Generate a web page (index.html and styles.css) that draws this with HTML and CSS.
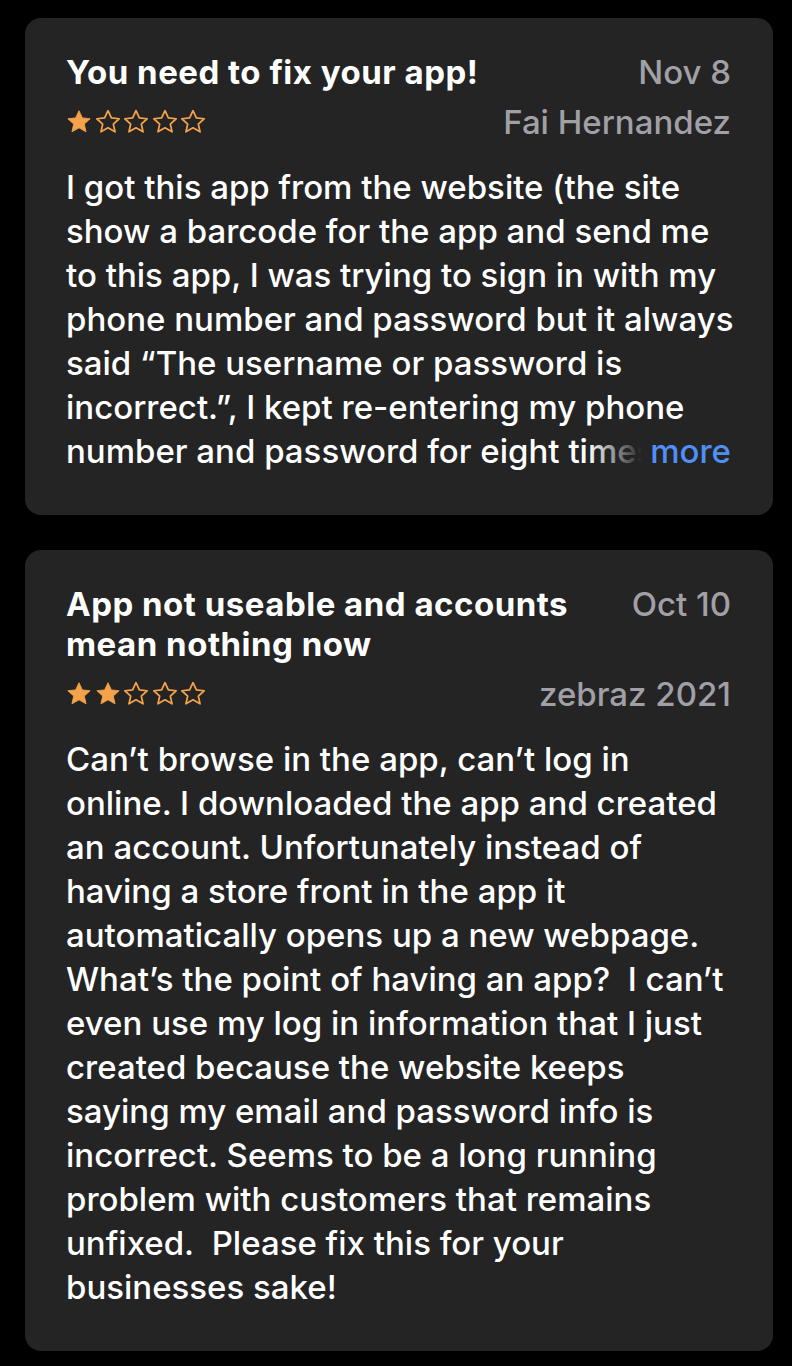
FILE: index.html
```html
<!DOCTYPE html>
<html lang="en">
<head>
<meta charset="utf-8">
<title>Reviews</title>
<link rel="stylesheet" href="styles.css">
</head>
<body>
<main class="list">
  <article class="card">
    <header class="head">
      <div class="row">
        <h2 class="title">You need to fix your app!</h2>
        <div class="date">Nov 8</div>
      </div>
      <div class="row meta">
        <div class="stars" aria-label="1 star">
          <svg class="star" viewBox="0 0 24 24"><path class="fill" d="M12 1.6l3.1 6.6 7.2.8-5.4 4.9 1.6 7.2L12 17.4l-6.5 3.7 1.6-7.2L1.7 9l7.2-.8z"/></svg>
          <svg class="star" viewBox="0 0 24 24"><path class="line" d="M12 1.6l3.1 6.6 7.2.8-5.4 4.9 1.6 7.2L12 17.4l-6.5 3.7 1.6-7.2L1.7 9l7.2-.8z"/></svg>
          <svg class="star" viewBox="0 0 24 24"><path class="line" d="M12 1.6l3.1 6.6 7.2.8-5.4 4.9 1.6 7.2L12 17.4l-6.5 3.7 1.6-7.2L1.7 9l7.2-.8z"/></svg>
          <svg class="star" viewBox="0 0 24 24"><path class="line" d="M12 1.6l3.1 6.6 7.2.8-5.4 4.9 1.6 7.2L12 17.4l-6.5 3.7 1.6-7.2L1.7 9l7.2-.8z"/></svg>
          <svg class="star" viewBox="0 0 24 24"><path class="line" d="M12 1.6l3.1 6.6 7.2.8-5.4 4.9 1.6 7.2L12 17.4l-6.5 3.7 1.6-7.2L1.7 9l7.2-.8z"/></svg>
        </div>
        <div class="author">Fai Hernandez</div>
      </div>
    </header>
    <div class="body clamp">
      <p>I got this app from the website (the site show a barcode for the app and send me to this app, I was trying to sign in with my phone number and password but it always said “The username or password is incorrect.”, I kept re-entering my phone number and password for eight times and it still did not work.</p>
      <span class="more">more</span>
    </div>
  </article>

  <article class="card">
    <header class="head">
      <div class="row">
        <h2 class="title">App not useable and accounts mean nothing now</h2>
        <div class="date">Oct 10</div>
      </div>
      <div class="row meta">
        <div class="stars" aria-label="2 stars">
          <svg class="star" viewBox="0 0 24 24"><path class="fill" d="M12 1.6l3.1 6.6 7.2.8-5.4 4.9 1.6 7.2L12 17.4l-6.5 3.7 1.6-7.2L1.7 9l7.2-.8z"/></svg>
          <svg class="star" viewBox="0 0 24 24"><path class="fill" d="M12 1.6l3.1 6.6 7.2.8-5.4 4.9 1.6 7.2L12 17.4l-6.5 3.7 1.6-7.2L1.7 9l7.2-.8z"/></svg>
          <svg class="star" viewBox="0 0 24 24"><path class="line" d="M12 1.6l3.1 6.6 7.2.8-5.4 4.9 1.6 7.2L12 17.4l-6.5 3.7 1.6-7.2L1.7 9l7.2-.8z"/></svg>
          <svg class="star" viewBox="0 0 24 24"><path class="line" d="M12 1.6l3.1 6.6 7.2.8-5.4 4.9 1.6 7.2L12 17.4l-6.5 3.7 1.6-7.2L1.7 9l7.2-.8z"/></svg>
          <svg class="star" viewBox="0 0 24 24"><path class="line" d="M12 1.6l3.1 6.6 7.2.8-5.4 4.9 1.6 7.2L12 17.4l-6.5 3.7 1.6-7.2L1.7 9l7.2-.8z"/></svg>
        </div>
        <div class="author">zebraz 2021</div>
      </div>
    </header>
    <div class="body">
      <p>Can’t browse in the app, can’t log in online. I downloaded the app and created an account. Unfortunately instead of having a store front in the app it automatically opens up a new webpage. What’s the point of having an app?&nbsp; I can’t even use my log in information that I just created because the website keeps saying my email and password info is incorrect. Seems to be a long running problem with customers that remains unfixed.&nbsp; Please fix this for your businesses sake!</p>
    </div>
  </article>
</main>
</body>
</html>
```
FILE: styles.css
```css
html, body {
  margin: 0;
  background: #000;
}
body {
  font-family: Inter, "Noto Sans", "Liberation Sans", sans-serif;
  color: #fff;
  -webkit-font-smoothing: antialiased;
}
.list {
  display: flex;
  flex-direction: column;
  gap: 35px;
  padding: 18px 19px 0 25px;
}
.card {
  background: #242424;
  border-radius: 16px;
  padding: 34px 42px 42px 41px;
}
.head {
  display: flex;
  flex-direction: column;
  gap: 8px;
}
.row {
  display: flex;
  justify-content: space-between;
  align-items: flex-start;
  gap: 40px;
}
.meta { align-items: center; }
.title {
  margin: 0;
  max-width: 520px;
  font-size: 33px;
  line-height: 40px;
  font-weight: 700;
  letter-spacing: 0.5px;
}
.date, .author {
  color: #a0a0a6;
  font-size: 33px;
  font-weight: 500;
  text-align: right;
  white-space: nowrap;
}
.date { line-height: 40px; }
.author { line-height: 44px; }
.stars {
  display: flex;
  align-items: center;
  gap: 2.5px;
  height: 44px;
}
.star {
  width: 26px;
  height: 26px;
  display: block;
}
.star .fill {
  fill: #f4a34b;
  stroke: #f4a34b;
  stroke-width: 0.8;
  stroke-linejoin: round;
}
.star .line {
  fill: none;
  stroke: #f4a34b;
  stroke-width: 1.6;
  stroke-linejoin: round;
}
.body {
  margin-top: 21px;
  font-size: 33px;
  font-weight: 500;
  line-height: 44px;
  letter-spacing: 0;
}
.body p { margin: 0; }
.clamp {
  position: relative;
  max-height: 308px;
  overflow: hidden;
  margin-right: -14px;
}
.more {
  position: absolute;
  right: 14px;
  bottom: 0;
  line-height: 44px;
  color: #4f8ff6;
  padding-left: 66px;
  background: linear-gradient(to right, rgba(36,36,36,0) 4px, #242424 58px);
}
```
